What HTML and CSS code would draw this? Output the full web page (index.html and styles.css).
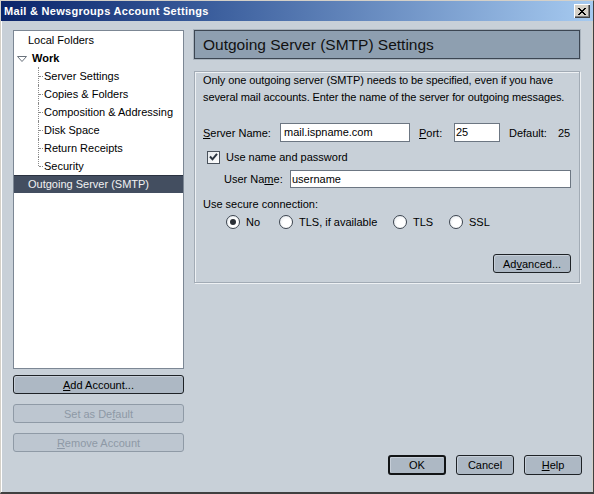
FILE: index.html
```html
<!DOCTYPE html>
<html>
<head>
<meta charset="utf-8">
<link rel="stylesheet" href="styles.css">
</head>
<body>
<div class="window">
  <div class="titlebar">
    <span class="title">Mail &amp; Newsgroups Account Settings</span>
    <div class="close"><svg width="8" height="7" viewBox="0 0 8 7"><path d="M0 0h2v1h-2zM6 0h2v1h-2zM1 1h2v1h-2zM5 1h2v1h-2zM2 2h4v1h-4zM3 3h2v1h-2zM2 4h4v1h-4zM1 5h2v1h-2zM5 5h2v1h-2zM0 6h2v1h-2zM6 6h2v1h-2z" fill="#000"/></svg></div>
  </div>
  <div class="client">
    <div class="main">
      <div class="sidebar">
        <div class="tree">
          <div class="row top">Local Folders</div>
          <div class="row top work"><svg class="twisty" width="10" height="6" viewBox="0 0 10 6"><path d="M0.5 0.5h9l-4.5 5z" fill="#fff" stroke="#6a727c" stroke-width="1"/></svg>Work</div>
          <div class="row child">Server Settings</div>
          <div class="row child">Copies &amp; Folders</div>
          <div class="row child">Composition &amp; Addressing</div>
          <div class="row child">Disk Space</div>
          <div class="row child">Return Receipts</div>
          <div class="row child last">Security</div>
          <div class="row top selected">Outgoing Server (SMTP)</div>
        </div>
        <div class="side-buttons">
          <button class="btn side"><u>A</u>dd Account...</button>
          <button class="btn side disabled">Set as De<u>f</u>ault</button>
          <button class="btn side disabled"><u>R</u>emove Account</button>
        </div>
      </div>
      <div class="panel">
        <div class="header">Outgoing Server (SMTP) Settings</div>
        <div class="group">
          <p class="desc">Only one outgoing server (SMTP) needs to be specified, even if you have<br>several mail accounts. Enter the name of the server for outgoing messages.</p>
          <div class="line server-line">
            <span class="lbl lbl-server"><u>S</u>erver Name:</span>
            <span class="field f-server">mail.ispname.com</span>
            <span class="lbl lbl-port"><u>P</u>ort:</span>
            <span class="field f-port">25</span>
            <span class="lbl lbl-default">Default:</span>
            <span class="lbl">25</span>
          </div>
          <div class="line check-line">
            <span class="checkbox"><svg width="9" height="8" viewBox="0 0 9 8"><path d="M1 3.5l2.5 2.8L8 0.8" fill="none" stroke="#2b3440" stroke-width="2"/></svg></span>
            <span class="lbl">Use name and password</span>
          </div>
          <div class="line user-line">
            <span class="lbl lbl-user">User Na<u>m</u>e:</span>
            <span class="field f-user">username</span>
          </div>
          <div class="line secure-label">Use secure connection:</div>
          <div class="line radio-line">
            <span class="opt opt-no"><span class="radio checked"></span>No</span>
            <span class="opt opt-tlsif"><span class="radio"></span>TLS, if available</span>
            <span class="opt opt-tls"><span class="radio"></span>TLS</span>
            <span class="opt"><span class="radio"></span>SSL</span>
          </div>
          <div class="line adv-line">
            <button class="btn adv">Ad<u>v</u>anced...</button>
          </div>
        </div>
      </div>
    </div>
    <div class="footer">
      <button class="btn foot default">OK</button>
      <button class="btn foot">Cancel</button>
      <button class="btn foot"><u>H</u>elp</button>
    </div>
  </div>
</div>
</body>
</html>
```
FILE: styles.css
```css
* { box-sizing: border-box; }
html, body { margin: 0; padding: 0; }
body {
  width: 594px;
  height: 494px;
  overflow: hidden;
  font-family: "Liberation Sans", Arial, sans-serif;
  font-size: 11px;
  color: #000;
  background: #c8d0d8;
}
.window {
  width: 594px;
  height: 494px;
  display: flex;
  flex-direction: column;
  background: #c8d0d8;
  border-top: 1px solid #d4d0c8;
  border-left: 1px solid #d4d0c8;
  border-right: 1px solid #404040;
  border-bottom: 2px solid #404040;
}
.titlebar {
  height: 20px;
  display: flex;
  align-items: center;
  justify-content: space-between;
  padding: 0 3px 0 3px;
  background: linear-gradient(to right, #0a246a 0%, #3a5d9c 35%, #a6caf0 100%);
}
.title {
  color: #fff;
  font-weight: bold;
  font-size: 11px;
  letter-spacing: 0.3px;
}
.close {
  width: 16px;
  height: 14px;
  background: #d4d0c8;
  display: flex;
  align-items: center;
  justify-content: center;
  box-shadow: inset 1px 1px 0 #fff, inset -1px -1px 0 #404040, inset -2px -2px 0 #808080;
}
.client {
  flex: 1;
  display: flex;
  flex-direction: column;
  border-left: 1px solid #fff;
  border-right: 1px solid #d4d0c8;
}
.main {
  flex: 1;
  display: flex;
  padding: 9px 0 0 11px;
}
.sidebar {
  width: 171px;
  display: flex;
  flex-direction: column;
}
.tree {
  height: 339px;
  background: #fff;
  border: 1px solid #7c8794;
}
.row {
  height: 18px;
  line-height: 18px;
  white-space: nowrap;
  position: relative;
}
.row.top { padding-left: 14px; }
.row.work {
  font-weight: bold;
  padding-left: 3px;
  display: flex;
  align-items: center;
}
.twisty { margin-right: 5px; margin-top: 1px; }
.row.child { padding-left: 30px; }
.row.child::before {
  content: "";
  position: absolute;
  left: 24px;
  top: 0;
  height: 18px;
  border-left: 1px dotted #8a8a8a;
}
.row.child.last::before { height: 9px; }
.row.child::after {
  content: "";
  position: absolute;
  left: 25px;
  top: 9px;
  width: 4px;
  border-top: 1px dotted #8a8a8a;
}
.row.selected {
  background: #434e60;
  color: #f2f2f2;
  border-top: 1px solid #2a3240;
  line-height: 16px;
}
.side-buttons {
  display: flex;
  flex-direction: column;
  gap: 10px;
  margin-top: 6px;
}
.btn {
  font-family: "Liberation Sans", Arial, sans-serif;
  font-size: 11px;
  color: #000;
  background: #adb8c4;
  border: 1px solid #1e2226;
  border-radius: 3px;
  padding: 0;
  box-shadow: inset 1px 1px 0 #c6ced8;
}
.btn.side { height: 19px; width: 171px; }
.btn.disabled {
  color: #8e99a6;
  border-color: #8f9aa6;
  background: #bdc6d0;
  box-shadow: none;
}
.panel {
  width: 386px;
  margin-left: 10px;
  display: flex;
  flex-direction: column;
}
.header {
  height: 29px;
  background: #8e9fb0;
  border: 1px solid #3c4652;
  outline: 1px solid #a8b2bc;
  font-size: 15.5px;
  line-height: 27px;
  padding-left: 8px;
  color: #111;
}
.group {
  margin-top: 12px;
  height: 212px;
  border: 1px solid #a2abb5;
  box-shadow: inset 1px 1px 0 #eef1f4, 1px 1px 0 #eef1f4;
  padding: 0 4px 0 8px;
  display: flex;
  flex-direction: column;
}
.desc {
  margin: 0;
  line-height: 17px;
  white-space: nowrap;
  letter-spacing: -0.1px;
}
.line {
  display: flex;
  align-items: center;
  white-space: nowrap;
}
.server-line { margin-top: 17px; height: 19px; }
.field {
  background: #fff;
  border: 1px solid #6c7682;
  height: 19px;
  line-height: 17px;
  padding-left: 3px;
}
.lbl-server { width: 77px; }
.f-server { width: 130px; }
.lbl-port { width: 35px; margin-left: 9px; }
.f-port { width: 46px; padding-left: 1px; }
.lbl-default { width: 49px; margin-left: 9px; }
.check-line { margin-top: 8px; height: 14px; padding-left: 4px; }
.checkbox {
  width: 13px;
  height: 13px;
  background: linear-gradient(135deg, #e4e8ec, #fff);
  border: 1px solid #4a525c;
  display: flex;
  align-items: center;
  justify-content: center;
  margin-right: 6px;
}
.user-line { margin-top: 6px; height: 18px; padding-left: 21px; }
.lbl-user { width: 66px; }
.f-user { width: 281px; height: 18px; line-height: 16px; padding-left: 1px; }
.secure-label { margin-top: 7px; height: 17px; }
.radio-line { margin-top: 1px; height: 18px; padding-left: 23px; }
.opt { display: flex; align-items: center; }
.opt-no { width: 53px; }
.opt-tlsif { width: 114px; }
.opt-tls { width: 56px; }
.radio {
  width: 14px;
  height: 14px;
  border-radius: 50%;
  border: 1px solid #3e4650;
  background: radial-gradient(circle at 60% 60%, #fff 40%, #dde3e9 100%);
  margin-right: 6px;
  position: relative;
}
.radio.checked::after {
  content: "";
  position: absolute;
  left: 3px;
  top: 3px;
  width: 6px;
  height: 6px;
  border-radius: 50%;
  background: #2a2f36;
}
.adv-line { margin-top: 23px; justify-content: flex-end; padding-right: 4px; }
.btn.adv { width: 78px; height: 19px; }
.footer {
  height: 37px;
  display: flex;
  justify-content: flex-end;
  gap: 10px;
  padding: 0 10px 0 0;
}
.btn.foot { width: 58px; height: 20px; }
.btn.default { border: 2px solid #121416; }
u { text-decoration: underline; text-underline-offset: 1px; }
```
